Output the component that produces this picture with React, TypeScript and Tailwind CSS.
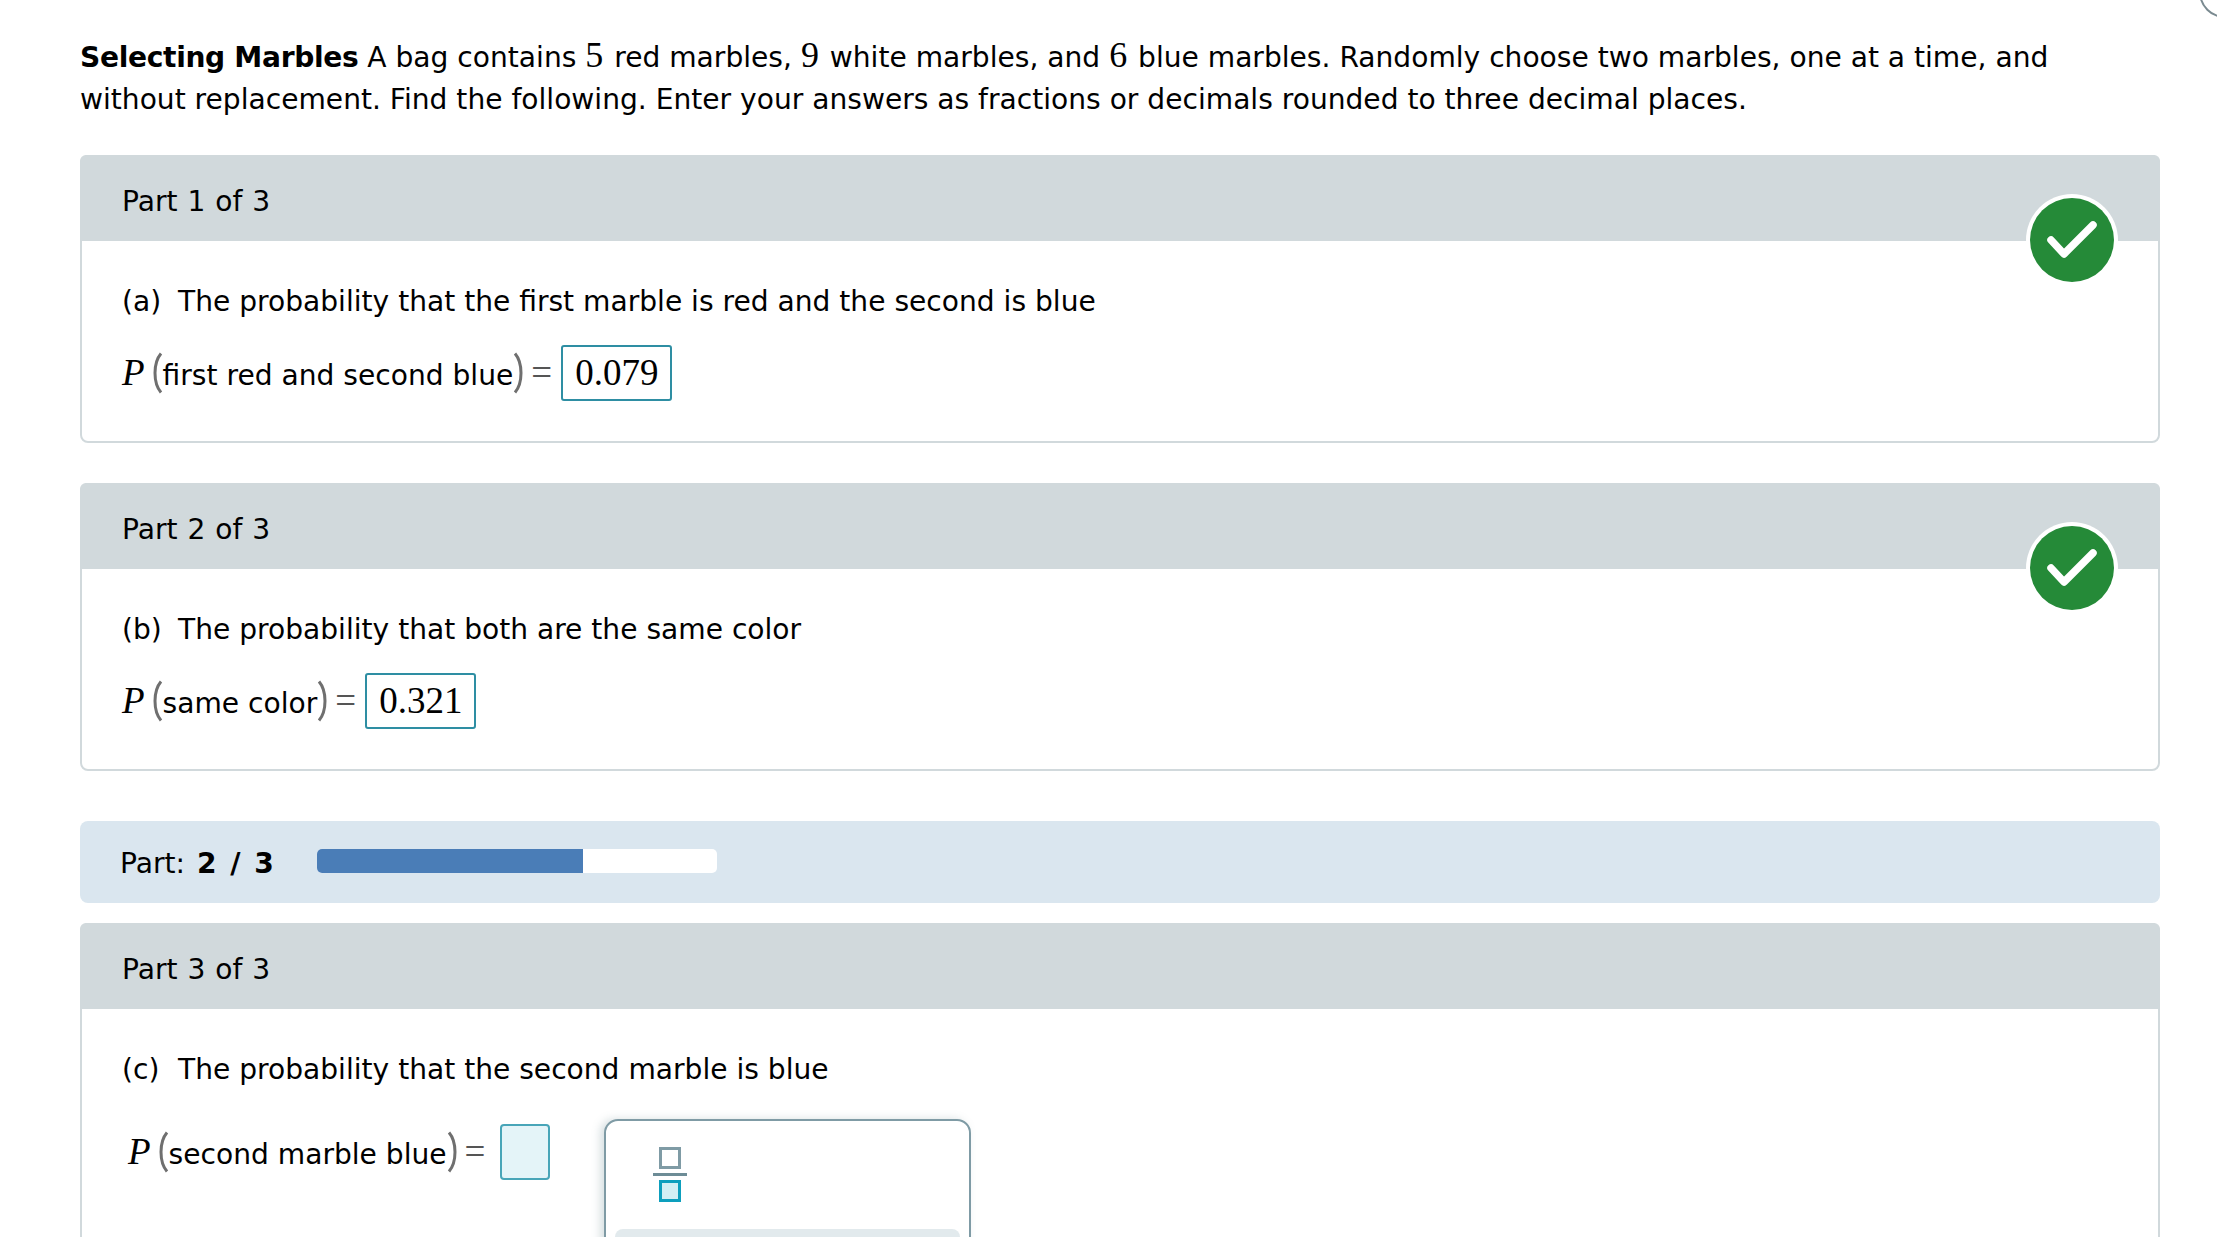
const sans = "font-['DejaVu_Sans',sans-serif]";
const serif = "font-['Liberation_Serif',serif]";

function CheckBadge() {
  return (
    <div className="absolute right-[40px] top-[37px] flex h-[92px] w-[92px] items-center justify-center rounded-full bg-white">
      <div className="flex h-[84px] w-[84px] items-center justify-center rounded-full bg-[#258a38]">
        <svg width="52" height="40" viewBox="0 0 52 40" fill="none" stroke="white" strokeWidth="7.5" strokeLinecap="round" strokeLinejoin="round">
          <polyline points="5,20 18,34 47,5" />
        </svg>
      </div>
    </div>
  );
}

function Paren({ flip }: { flip?: boolean }) {
  return (
    <svg width="13" height="42" viewBox="0 0 13 42" fill="none" stroke="#6f6f6f" strokeWidth="3" className={flip ? "-scale-x-100" : ""}>
      <path d="M11 1.5 C3 11 3 31 11 40.5" />
    </svg>
  );
}

function MathLine({ label }: { label: string }) {
  return (
    <>
      <span className={`${serif} text-[37px] italic pr-[5px]`}>P</span>
      <Paren />
      <span className="pt-[6px]">{label}</span>
      <Paren flip />
      <span className={`${serif} pl-[5px] text-[37px] text-[#555]`}>=</span>
    </>
  );
}

function PartCard({
  title,
  tag,
  question,
  label,
  answer,
}: {
  title: string;
  tag: string;
  question: string;
  label: string;
  answer: string;
}) {
  return (
    <section className="relative h-[288px] rounded-[8px] border-2 border-[#d1d9dc] bg-white">
      <header className="-mx-[2px] -mt-[2px] flex h-[86px] items-center rounded-t-[6px] bg-[#d1d9dc] pl-[40px] pt-[8px] [word-spacing:1px]">
        <span className="pl-[2px]">{title}</span>
      </header>
      <div className="pl-[40px]">
        <p className="mt-[43px] leading-[36px]">
          <span className="inline-block w-[56px]">{tag}</span>
          {question}
        </p>
        <div className="mt-[24px] flex h-[58px] items-center">
          <MathLine label={label} />
          <span className={`${serif} ml-[9px] flex h-[56px] items-center rounded-[3px] border-2 border-[#2e8ea3] px-[12px] text-[37px]`}>
            {answer}
          </span>
        </div>
      </div>
      <CheckBadge />
    </section>
  );
}

export default function App() {
  return (
    <div className={`${sans} relative h-[1237px] w-[2217px] overflow-hidden bg-white text-[28.12px] text-black`}>
      <div className="absolute -right-[34px] -top-[34px] h-[52px] w-[52px] rounded-full border-2 border-[#7a8a90]" />
      <main className="pl-[80px] pr-[57px] pt-[34px]">
        <p className="leading-[42px]">
          <b className="tracking-[-0.33px]">Selecting Marbles</b> A bag contains <span className={`${serif} mr-[2px] text-[36px]`}>5</span> red marbles,{" "}
          <span className={`${serif} mr-[2px] text-[36px]`}>9</span> white marbles, and{" "}
          <span className={`${serif} mr-[2px] text-[36px]`}>6</span> blue marbles. Randomly choose two marbles, one at a time, and
          <br />
          without replacement. Find the following. Enter your answers as fractions or decimals rounded to three decimal places.
        </p>

        <div className="mt-[34px]">
          <PartCard
            title="Part 1 of 3"
            tag="(a)"
            question="The probability that the first marble is red and the second is blue"
            label="first red and second blue"
            answer="0.079"
          />
        </div>
        <div className="mt-[40px]">
          <PartCard
            title="Part 2 of 3"
            tag="(b)"
            question="The probability that both are the same color"
            label="same color"
            answer="0.321"
          />
        </div>

        <div className="mt-[50px] flex h-[82px] items-center rounded-[8px] bg-[#dae6ef] pl-[40px]">
          <span className="pt-[5px]">
            Part: <b className="ml-[3px] [word-spacing:4px]">2 / 3</b>
          </span>
          <div className="-mt-[2px] ml-[43px] h-[24px] w-[400px] overflow-hidden rounded-[5px] bg-white">
            <div className="h-full w-[266px] bg-[#4a7db7]" />
          </div>
        </div>

        <section className="mt-[20px] h-[400px] rounded-[8px] border-2 border-[#d1d9dc] bg-white">
          <header className="-mx-[2px] -mt-[2px] flex h-[86px] items-center rounded-t-[6px] bg-[#d1d9dc] pl-[40px] pt-[8px] [word-spacing:1px]">
            <span className="pl-[2px]">Part 3 of 3</span>
          </header>
          <div className="pl-[40px]">
            <p className="mt-[43px] leading-[36px]">
              <span className="inline-block w-[56px]">(c)</span>
              The probability that the second marble is blue
            </p>
            <div className="mt-[31px] flex items-start">
              <div className="mt-[4px] flex h-[58px] w-[430px] items-center pl-[6px]">
                <MathLine label="second marble blue" />
                <span className="ml-[15px] h-[56px] w-[50px] rounded-[4px] border-2 border-[#48a5b8] bg-[#e4f4f8]" />
              </div>
              <div className="ml-[52px] h-[200px] w-[367px] rounded-[14px] border-2 border-[#7f9ba5] bg-white px-[9px] shadow-[-4px_0_8px_rgba(100,130,140,0.25)]">
                <div className="ml-[38px] mt-[26px] flex w-[34px] flex-col items-center">
                  <div className="h-[22px] w-[22px] border-[3px] border-[#7f9ba5]" />
                  <div className="my-[4px] h-[3px] w-[34px] bg-[#6d8c96]" />
                  <div className="h-[22px] w-[22px] border-[3px] border-[#0d9fbd] bg-[#d2eff4]" />
                </div>
                <div className="mt-[27px] h-[40px] rounded-[8px] bg-[#e2eaed]" />
              </div>
            </div>
          </div>
        </section>
      </main>
    </div>
  );
}
